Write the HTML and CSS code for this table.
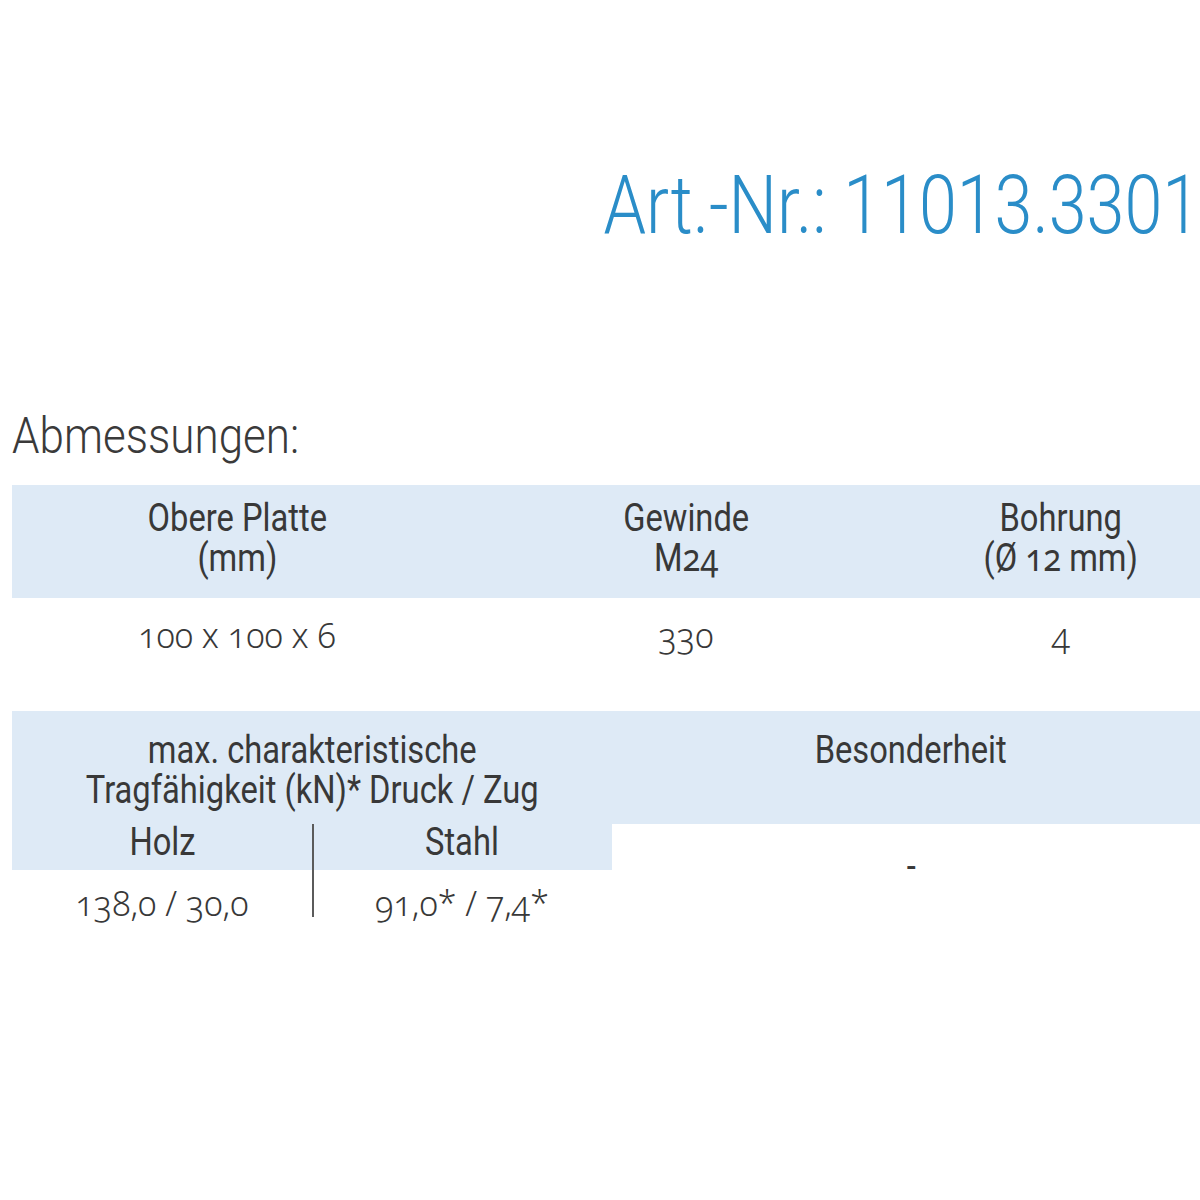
FILE: index.html
```html
<!DOCTYPE html>
<html lang="de">
<head>
<meta charset="utf-8">
<title>Art.-Nr.: 11013.3301</title>
<link rel="stylesheet" href="styles.css">
</head>
<body>
<div class="page">
  <h1 class="artnr"><span class="sx-r">Art.-Nr.: 11013.3301</span></h1>
  <h2 class="title"><span class="sx-l">Abmessungen:</span></h2>

  <div class="t1">
    <div class="cell head"><span class="sx">Obere Platte<br>(mm)</span></div>
    <div class="cell head"><span class="sx">Gewinde<br>M<span class="num">24</span></span></div>
    <div class="cell head"><span class="sx">Bohrung<br>(Ø <span class="num">12</span> mm)</span></div>
    <div class="cell data"><span class="num">100 x 100 x 6</span></div>
    <div class="cell data"><span class="num">330</span></div>
    <div class="cell data"><span class="num">4</span></div>
  </div>

  <div class="t2">
    <div class="cell head2 span2"><span class="sx">max. charakteristische<br>Tragfähigkeit (kN)* Druck / Zug</span></div>
    <div class="cell head2"><span class="sx">Besonderheit</span></div>
    <div class="cell sub"><span class="sx">Holz</span></div>
    <div class="cell sub divider"><span class="sx">Stahl</span></div>
    <div class="cell dash"><span class="sx">-</span></div>
    <div class="cell data2"><span class="num">138,0 / 30,0</span></div>
    <div class="cell data2 divider"><span class="num">91,0* / 7,4*</span></div>
  </div>
</div>
</body>
</html>
```

FILE: styles.css
```css
html, body {
  margin: 0;
  padding: 0;
  background: #ffffff;
}

body {
  font-family: Roboto, "Liberation Sans", Arial, sans-serif;
  color: #383838;
}

.page {
  width: 1200px;
  height: 1200px;
  overflow: hidden;
  box-sizing: border-box;
  padding-left: 12px;
}

.artnr {
  margin: 164px 0 0 0;
  font-weight: 300;
  font-size: 82px;
  line-height: 82px;
  color: #2a8dc8;
  text-align: right;
  white-space: nowrap;
}

.sx-r {
  display: inline-block;
  transform: scaleX(0.832);
  transform-origin: right center;
}

.title {
  margin: 165px 0 0 0;
  font-weight: 300;
  font-size: 50px;
  line-height: 50px;
  color: #3a3a3a;
  white-space: nowrap;
}

.sx-l {
  display: inline-block;
  transform: scaleX(0.88);
  transform-origin: left center;
}

.sx {
  display: inline-block;
  transform: scaleX(0.86);
  transform-origin: center center;
  white-space: nowrap;
}

.num {
  font-family: "Noto Sans", sans-serif;
  font-weight: 300;
  font-variant-numeric: oldstyle-nums;
  font-feature-settings: "onum" 1;
  white-space: nowrap;
}

.sx .num {
  line-height: 0;
  font-weight: 400;
}

.cell {
  text-align: center;
}

/* Table 1 */
.t1 {
  margin-top: 24px;
  width: 1200px;
  display: grid;
  grid-template-columns: 450px 448px 302px;
}

.head {
  background: #deeaf6;
  font-size: 38px;
  line-height: 40px;
  padding: 13px 0 20px;
  height: 80px;
}

.data {
  font-size: 34px;
  line-height: 40px;
  padding: 17px 0 56px;
  height: 40px;
}

/* Table 2 */
.t2 {
  width: 1198px;
  display: grid;
  grid-template-columns: 300px 300px 598px;
}

.span2 {
  grid-column: span 2;
}

.head2 {
  background: #deeaf6;
  font-size: 38px;
  line-height: 40px;
  padding: 19px 0 14px;
  height: 80px;
}

.sub {
  background: #deeaf6;
  font-size: 38px;
  line-height: 36px;
  padding: 0 0 10px;
}

.divider {
  box-shadow: inset 2px 0 0 #5b5b5b;
}

.dash {
  grid-column: 3;
  grid-row: 2 / span 2;
  font-size: 38px;
  display: flex;
  align-items: center;
  justify-content: center;
  padding-bottom: 10px;
}

.data2 {
  font-size: 34px;
  line-height: 40px;
  padding: 13px 0 0;
  height: 34px;
  overflow: visible;
}
```
